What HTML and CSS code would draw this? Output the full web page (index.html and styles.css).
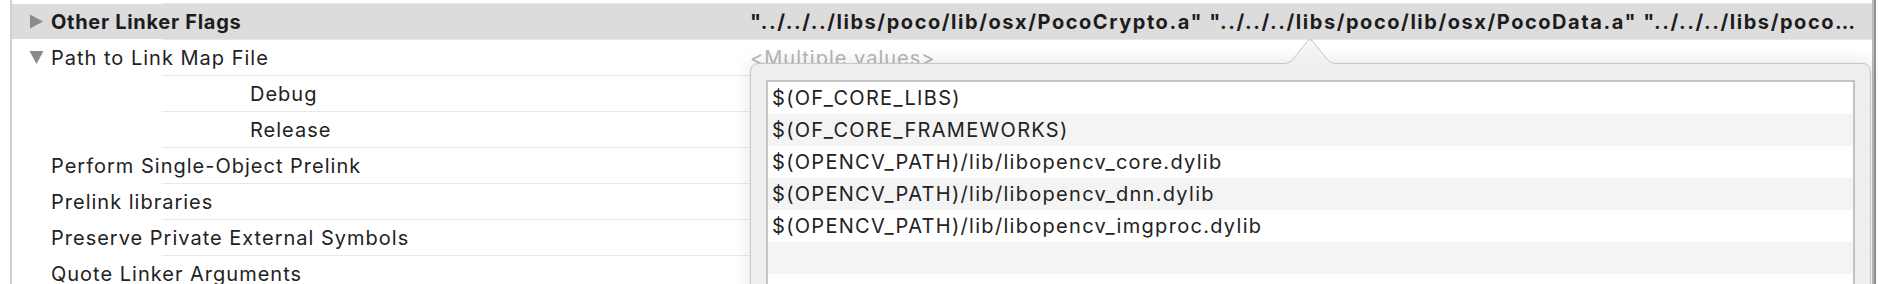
FILE: index.html
```html
<!DOCTYPE html>
<html lang="en">
<head>
    <meta charset="UTF-8">
    <title>Build Settings - Linking</title>
    <link rel="stylesheet" href="styles.css">
</head>
<body>
    <div class="window">
        <div class="settings">
            <div class="row selected">
                <div class="name">
                    <svg class="disclosure" viewBox="0 0 15 15"><path d="M1 0.5 L14 7.5 L1 14.5 Z"/></svg>
                    Other Linker Flags
                </div>
                <div class="value">"../../../libs/poco/lib/osx/PocoCrypto.a" "../../../libs/poco/lib/osx/PocoData.a" "../../../libs/poco…</div>
            </div>
            <div class="row">
                <div class="name">
                    <svg class="disclosure" viewBox="0 0 15 15"><path d="M0.5 1 L14.5 1 L7.5 14 Z"/></svg>
                    Path to Link Map File
                </div>
                <div class="value placeholder">&lt;Multiple values&gt;</div>
            </div>
            <div class="row child">
                <div class="name">Debug</div>
            </div>
            <div class="row child">
                <div class="name">Release</div>
            </div>
            <div class="row">
                <div class="name plain">Perform Single-Object Prelink</div>
            </div>
            <div class="row">
                <div class="name plain">Prelink libraries</div>
            </div>
            <div class="row">
                <div class="name plain">Preserve Private External Symbols</div>
            </div>
            <div class="row">
                <div class="name plain">Quote Linker Arguments</div>
            </div>
        </div>
        <div class="edge"></div>

        <div class="popover">
            <svg class="arrow" viewBox="0 0 56 27">
                <defs>
                    <linearGradient id="arrowFill" x1="0" y1="0" x2="0" y2="1">
                        <stop offset="0" stop-color="#f8f8f8"/>
                        <stop offset="1" stop-color="#eeeeee"/>
                    </linearGradient>
                </defs>
                <path d="M0 24.5 C6 24.5 9 23 12 19 L26 1.5 Q28 -0.5 30 1.5 L44 19 C47 23 50 24.5 56 24.5 L56 27 L0 27 Z" fill="url(#arrowFill)"/>
                <path d="M0 24.5 C6 24.5 9 23 12 19 L26 1.5 Q28 -0.5 30 1.5 L44 19 C47 23 50 24.5 56 24.5" fill="none" stroke="#c4c4c4" stroke-width="1"/>
            </svg>
            <ul class="value-list">
                <li>$(OF_CORE_LIBS)</li>
                <li>$(OF_CORE_FRAMEWORKS)</li>
                <li>$(OPENCV_PATH)/lib/libopencv_core.dylib</li>
                <li>$(OPENCV_PATH)/lib/libopencv_dnn.dylib</li>
                <li>$(OPENCV_PATH)/lib/libopencv_imgproc.dylib</li>
                <li></li>
                <li></li>
            </ul>
        </div>
    </div>
</body>
</html>
```

FILE: styles.css
```css
* { margin: 0; padding: 0; box-sizing: border-box; }

body {
    font-family: Inter, "Noto Sans", sans-serif;
    background: #ffffff;
    color: #222222;
    width: 1878px;
    height: 284px;
    overflow: hidden;
}

.window {
    position: relative;
    display: flex;
    height: 284px;
}

.settings {
    width: 1862px;
    margin-left: 10px;
    padding-top: 3px;
    border-left: 2px solid #d2d2d2;
}

.row {
    display: flex;
    align-items: center;
    height: 36px;
    padding-top: 1px;
    font-size: 20px;
    letter-spacing: 1px;
    background: linear-gradient(#e8e8e8, #e8e8e8) 150px 0 / 100% 1px no-repeat;
}

.row.selected {
    background:
        linear-gradient(#e8e8e8, #e8e8e8) 150px 0 / 100% 1px no-repeat,
        linear-gradient(#dcdcdc, #dcdcdc) 0 1px / 100% 35px no-repeat;
    font-weight: 700;
    color: #1c1c1c;
}

.name {
    display: flex;
    align-items: center;
    width: 736px;
    padding-left: 17px;
    white-space: nowrap;
}

.row.selected .name {
    letter-spacing: 0.7px;
}

.name.plain {
    padding-left: 39px;
}

.row.child .name {
    padding-left: 238px;
}

.disclosure {
    width: 15px;
    height: 15px;
    margin-right: 7px;
    fill: #8a8a8a;
}

.value {
    white-space: nowrap;
    overflow: hidden;
    flex: 1;
}

.row.selected .value {
    letter-spacing: 1.55px;
    padding-left: 2px;
}

.value.placeholder {
    color: #b6b6b6;
    padding-left: 2px;
}

.edge {
    width: 6px;
    border-left: 2px solid #bcbcbc;
    background: #ffffff;
    box-shadow: inset 2px 0 0 #959595;
}

.popover {
    position: absolute;
    left: 750px;
    top: 63px;
    width: 1121px;
    height: 260px;
    padding: 16px 15px 0 15px;
    background: #eeeeee;
    border: 1px solid #c6c6c6;
    border-radius: 8px;
    box-shadow: 0 0 18px rgba(0, 0, 0, 0.12);
}

.arrow {
    position: absolute;
    left: 531px;
    top: -25px;
    width: 56px;
    height: 27px;
}

.value-list {
    list-style: none;
    background: #ffffff;
    border: 2px solid #c3c3c3;
    border-bottom: none;
    height: 250px;
}

.value-list li {
    height: 32px;
    line-height: 32px;
    padding-left: 4px;
    font-size: 20px;
    letter-spacing: 1.3px;
    white-space: nowrap;
}

.value-list li:nth-child(even) {
    background: #f4f4f4;
}
```
